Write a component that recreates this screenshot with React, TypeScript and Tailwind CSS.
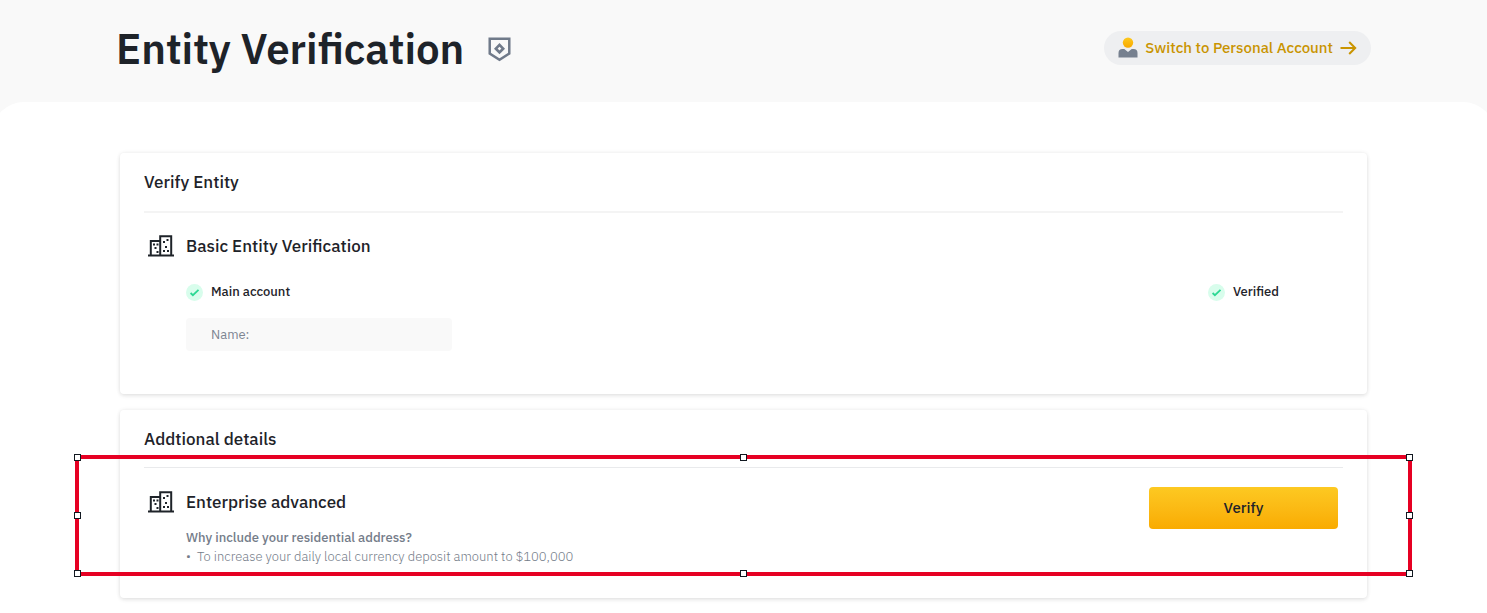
import type { ReactNode } from 'react';

function BadgeIcon() {
  return (
    <svg width="23" height="25" viewBox="0 0 24 26" fill="none" stroke="#707a8a" className="shrink-0">
      <path d="M1.8 1.8h20.4v15.4L12 23.7 1.8 17.2z" strokeWidth="2.6" />
      <path d="M12 8.2l3.8 3.9-3.8 3.9-3.8-3.9z" strokeWidth="2.8" />
    </svg>
  );
}

function PersonIcon() {
  return (
    <svg width="20" height="22" viewBox="0 0 20 22" className="shrink-0">
      <defs>
        <linearGradient id="person-head" x1="0" y1="0" x2="0" y2="1">
          <stop offset="0" stopColor="#fdc91f" />
          <stop offset="1" stopColor="#f8a900" />
        </linearGradient>
      </defs>
      <circle cx="10" cy="5.6" r="5.2" fill="url(#person-head)" />
      <path d="M.5 20.5V16a4 4 0 0 1 4-4h1.8l3.7 3 3.7-3h1.8a4 4 0 0 1 4 4v4.500z" fill="#76808f" />
    </svg>
  );
}

function ArrowIcon() {
  return (
    <svg width="17" height="14" viewBox="0 0 17 14" fill="none" stroke="#c99400" strokeWidth="2" className="shrink-0">
      <path d="M.5 7h14.5M9.2 1l6 6-6 6" />
    </svg>
  );
}

function BuildingIcon() {
  return (
    <svg width="26" height="22" viewBox="0 0 26 22" fill="none" className="mt-px shrink-0">
      <path d="M0 20.5h26" stroke="#1e2329" strokeWidth="2" />
      <path d="M2.8 20V6h8.4M12.2 20V1.3h11V20" stroke="#1e2329" strokeWidth="2" />
      <path
        d="M5 8.5h2v2H5zM8.5 8.5h2v2h-2zM6.5 12h2v2h-2zM8.5 16h2v2h-2zM18.5 4h2v2h-2zM15 6h2v2h-2zM17 11h2v2h-2zM15 15h2v2h-2zM19 15h2v2h-2z"
        fill="#1e2329"
      />
    </svg>
  );
}

function CheckLabel({ children }: { children: ReactNode }) {
  return (
    <div className="flex items-center gap-2 text-[13px] leading-5 font-medium">
      <svg width="17" height="17" viewBox="0 0 17 17" fill="none" className="shrink-0">
        <circle cx="8.5" cy="8.5" r="8.5" fill="#d8fdec" />
        <path d="M4.6 9l2.3 2.2 5.6-5.3" stroke="#2bd893" strokeWidth="1.8" />
      </svg>
      <span>{children}</span>
    </div>
  );
}

// Selection frame drawn around the advanced verification row
function SelectionFrame() {
  const handles = [
    '-left-[5px] -top-[5px]',
    'left-1/2 -ml-[4px] -top-[5px]',
    '-right-[5px] -top-[5px]',
    '-left-[5px] top-1/2 -mt-[4px]',
    '-right-[5px] top-1/2 -mt-[4px]',
    '-left-[5px] -bottom-[5px]',
    'left-1/2 -ml-[4px] -bottom-[5px]',
    '-right-[5px] -bottom-[5px]',
  ];

  return (
    <div className="absolute -left-[45px] -right-[45px] top-[45px] bottom-[22px] border-4 border-[#e60023] pointer-events-none">
      {handles.map((position) => (
        <span key={position} className={`absolute size-[7px] bg-white border border-[#111820] ${position}`} />
      ))}
    </div>
  );
}

export default function App() {
  return (
    <div className="bg-[#f9f9f9] overflow-hidden text-[#1e2329] font-['IBM_Plex_Sans',Roboto,sans-serif]">
      {/* Page header */}
      <header className="max-w-[1255px] mx-auto h-[102px] pb-1 flex items-center justify-between">
        <div className="flex items-center gap-6">
          <h1 className="text-[42px] leading-[52px] font-semibold">Entity Verification</h1>
          <BadgeIcon />
        </div>
        <a
          href="#personal"
          className="mb-[2px] h-[34px] px-[14px] rounded-full bg-[#eeeff1] flex items-center gap-[7px] text-[15px] font-medium text-[#c99400]"
        >
          <PersonIcon />
          <span className="pt-px">Switch to Personal Account</span>
          <ArrowIcon />
        </a>
      </header>

      <main className="-mx-2 px-2 bg-white rounded-t-[32px] pt-[51px] pb-[15px]">
        <div className="max-w-[1247px] mx-auto space-y-4">
          {/* Basic verification */}
          <section className="px-6 pb-[43px] bg-white rounded-sm shadow-[0_0_4px_rgba(0,0,0,0.08),0_2px_4px_rgba(0,0,0,0.08)]">
            <h2 className="h-[60px] pt-px border-b-2 border-[#f4f4f4] flex items-center text-[17px] font-medium">
              Verify Entity
            </h2>
            <div className="pt-[21px] pl-1 flex gap-3">
              <BuildingIcon />
              <div className="flex-1">
                <h3 className="text-[17px] leading-6 font-medium">Basic Entity Verification</h3>
                <div className="mt-6 flex justify-between pr-16">
                  <CheckLabel>Main account</CheckLabel>
                  <CheckLabel>Verified</CheckLabel>
                </div>
                <div className="mt-4 w-[266px] h-[33px] pl-[25px] pr-3 rounded-sm bg-[#f9f9f9] flex items-center gap-2 text-[13px] text-[#7d8592]">
                  <label htmlFor="entity-name">Name:</label>
                  <input id="entity-name" type="text" readOnly className="min-w-0 flex-1 bg-transparent outline-none" />
                </div>
              </div>
            </div>
          </section>

          {/* Advanced verification */}
          <section className="relative px-6 pb-8 bg-white rounded-sm shadow-[0_0_4px_rgba(0,0,0,0.08),0_2px_4px_rgba(0,0,0,0.08)]">
            <h2 className="h-[58px] pt-[2px] border-b border-[#e9eaec] flex items-center text-[17px] font-medium">
              Addtional details
            </h2>
            <div className="pt-[22px] pl-1 flex gap-3">
              <BuildingIcon />
              <div className="flex-1">
                <h3 className="text-[17px] leading-6 font-medium">Enterprise advanced</h3>
                <div className="mt-[14px] text-[13px] leading-[19px] text-[#747c89]">
                  <p className="font-medium">Why include your residential address?</p>
                  <ul className="font-light">
                    <li className="flex">
                      <span className="w-[11px]">•</span>
                      To increase your daily local currency deposit amount to $100,000
                    </li>
                  </ul>
                </div>
              </div>
              <button
                type="button"
                className="-mt-[3px] mr-[5px] w-[189px] h-[42px] rounded-sm bg-linear-to-b from-[#fdc921] to-[#f9ab00] text-[15px] font-medium"
              >
                Verify
              </button>
            </div>
            <SelectionFrame />
          </section>
        </div>
      </main>
    </div>
  );
}
